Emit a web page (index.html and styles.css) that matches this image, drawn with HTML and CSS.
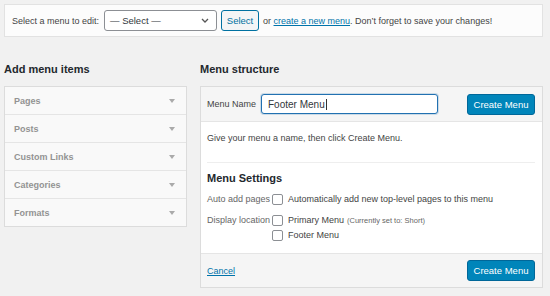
FILE: index.html
```html
<!DOCTYPE html>
<html>
<head>
<meta charset="utf-8">
<link rel="stylesheet" href="styles.css">
</head>
<body>
<div class="wrap">
  <div class="topbar">
    <span class="lbl">Select a menu to edit:</span>
    <div class="select"><span>— Select —</span>
      <svg width="8" height="5" viewBox="0 0 8 5"><path d="M1 1l3 3 3-3" fill="none" stroke="#555" stroke-width="1.3"/></svg>
    </div>
    <button class="btn-sec">Select</button>
    <span class="note">or <a href="#">create a new menu</a>. Don’t forget to save your changes!</span>
  </div>

  <div class="cols">
    <div class="left">
      <h3>Add menu items</h3>
      <div class="acc">
        <div class="acc-row"><span>Pages</span><i class="tri"></i></div>
        <div class="acc-row"><span>Posts</span><i class="tri"></i></div>
        <div class="acc-row"><span>Custom Links</span><i class="tri"></i></div>
        <div class="acc-row"><span>Categories</span><i class="tri"></i></div>
        <div class="acc-row"><span>Formats</span><i class="tri"></i></div>
      </div>
    </div>
    <div class="right">
      <h3>Menu structure</h3>
      <div class="panel">
        <div class="phead">
          <span class="mn">Menu Name</span>
          <div class="input">Footer Menu<span class="caret"></span></div>
          <button class="btn-pri">Create Menu</button>
        </div>
        <div class="pbody">
          <p class="hint">Give your menu a name, then click Create Menu.</p>
          <div class="divider"></div>
          <h4>Menu Settings</h4>
          <div class="settings">
            <span class="slbl">Auto add pages</span>
            <div class="opts">
              <label class="opt"><i class="cb"></i>Automatically add new top-level pages to this menu</label>
            </div>
            <span class="slbl">Display location</span>
            <div class="opts">
              <label class="opt"><i class="cb"></i>Primary Menu <small>(Currently set to: Short)</small></label>
              <label class="opt"><i class="cb"></i>Footer Menu</label>
            </div>
          </div>
        </div>
        <div class="pfoot">
          <a href="#">Cancel</a>
          <button class="btn-pri">Create Menu</button>
        </div>
      </div>
    </div>
  </div>
</div>
</body>
</html>
```

FILE: styles.css
```css
* { box-sizing: border-box; }
html, body { margin: 0; padding: 0; }
body {
  background: #f1f1f1;
  font-family: "Liberation Sans", Arial, sans-serif;
  font-size: 9px;
  color: #444;
  width: 550px;
  height: 296px;
  overflow: hidden;
  white-space: nowrap;
}
.wrap { padding: 4px 7px 0 4px; }
.topbar {
  height: 33px;
  background: #fcfcfc;
  border: 1px solid #e2e2e2;
  display: flex;
  align-items: center;
  padding-left: 7px;
}
.lbl { width: 92px; }
.select {
  width: 113px;
  height: 21px;
  border: 1px solid #8c8f94;
  border-radius: 3px;
  background: #fff;
  display: flex;
  align-items: center;
  justify-content: space-between;
  padding: 0 7px 0 5px;
  font-size: 9.5px;
  color: #32373c;
}
.btn-sec {
  margin-left: 4px;
  width: 38px;
  height: 21px;
  border: 1px solid #0071a1;
  border-radius: 3px;
  background: #f3f5f6;
  color: #0071a1;
  font: inherit;
  font-size: 9.5px;
  padding: 0;
}
.note { margin-left: 4px; }
a { color: #0073aa; text-decoration: underline; }

.cols {
  display: grid;
  grid-template-columns: 183px 343px;
  column-gap: 13px;
}
h3 {
  margin: 24px 0 9px;
  font-size: 11px;
  line-height: 16px;
  font-weight: bold;
  color: #23282d;
}
.acc { border: 1px solid #dcdcdc; background: #f9f9f9; }
.acc-row {
  height: 28px;
  border-top: 1px solid #e5e5e5;
  display: flex;
  align-items: center;
  justify-content: space-between;
  padding: 0 11px 0 9px;
  font-weight: bold;
  color: #939393;
  font-size: 9px;
}
.acc-row:first-child { border-top: 0; height: 27px; }
.tri {
  width: 0; height: 0;
  border-left: 3px solid transparent;
  border-right: 3px solid transparent;
  border-top: 4px solid #aaa;
}

.panel { border: 1px solid #dcdcdc; background: #fff; }
.phead {
  height: 35px;
  background: #f5f5f5;
  border-bottom: 1px solid #e5e5e5;
  display: flex;
  align-items: center;
  padding: 0 7px 0 6px;
}
.mn { width: 54px; }
.input {
  width: 177px;
  height: 20px;
  border: 1.5px solid #2271b1;
  border-radius: 3px;
  background: #fff;
  font-size: 10px;
  color: #32373c;
  display: flex;
  align-items: center;
  padding-left: 6px;
  box-shadow: 0 0 0 1px rgba(34,113,177,.2);
}
.caret { display: inline-block; width: 1px; height: 11px; background: #333; margin-left: 1px; }
.btn-pri {
  margin-left: auto;
  width: 68px;
  height: 21px;
  background: #0085ba;
  border: 1px solid #006799;
  border-radius: 3px;
  color: #fff;
  font: inherit;
  font-size: 9.5px;
  padding: 0;
}
.pbody { padding: 0 7px 10px 6px; }
.hint { margin: 0; padding-top: 10px; line-height: 13px; }
.divider { height: 1px; background: #eee; margin-top: 17px; }
h4 {
  margin: 7px 0 0;
  font-size: 11px;
  line-height: 16px;
  font-weight: bold;
  color: #23282d;
}
.settings {
  margin-top: 6px;
  display: grid;
  grid-template-columns: 65px 1fr;
  row-gap: 6px;
  color: #666;
}
.slbl { line-height: 15px; }
.opts { display: flex; flex-direction: column; color: #444; }
.opt { display: flex; align-items: center; line-height: 15px; }
.opt small { font-size: 7.5px; color: #666; margin-left: 3px; }
.cb {
  width: 11px; height: 11px;
  border: 1px solid #8c8f94;
  border-radius: 2px;
  background: #fff;
  margin-right: 5px;
  flex: none;
}
.pfoot {
  height: 34px;
  background: #f5f5f5;
  border-top: 1px solid #e5e5e5;
  display: flex;
  align-items: center;
  padding: 0 7px 0 6px;
}
```
